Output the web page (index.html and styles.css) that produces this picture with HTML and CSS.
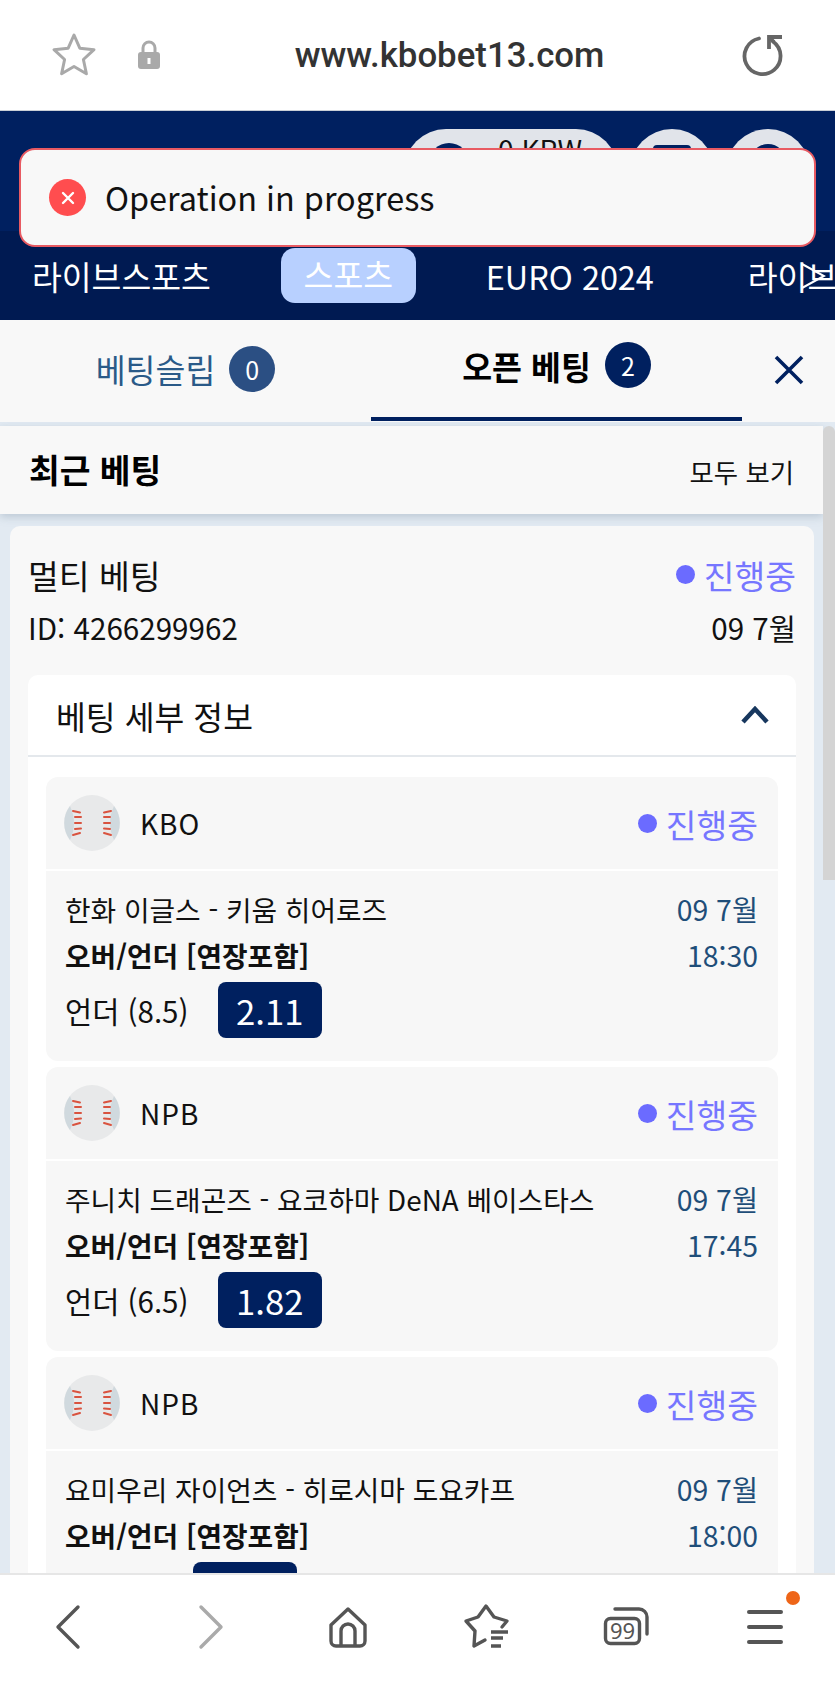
FILE: index.html
```html
<!DOCTYPE html>
<html lang="ko">
<head>
    <meta charset="UTF-8">
    <title>kbobet13</title>
    <link rel="stylesheet" href="styles.css">
</head>
<body>
<svg class="defs" width="0" height="0">
    <symbol id="ball" viewBox="0 0 56 56">
        <circle cx="28" cy="28" r="28" fill="#e8e9ea"/>
        <path d="M6 11 Q14 28 6 45 A28 28 0 0 1 6 11Z M50 11 Q42 28 50 45 A28 28 0 0 0 50 11Z" fill="#d0d9de"/>
        <g stroke="#d9533f" stroke-width="2" stroke-linecap="round" fill="none">
            <path d="M9 16l7 1.500M11 22l6 0M11 28l6 0M11 34l6-.500M9 40l7-2"/>
            <path d="M47 16l-7 1.500M46 22l-6 0M46 28l-6 0M46 34l-6-.500M47 40l-7-2"/>
        </g>
    </symbol>
</svg>

<div class="page">
    <div class="urlbar">
        <svg class="ic-star" width="46" height="46" viewBox="0 0 46 46"><path d="M23 3l5.800 13.200 14.200 1.500-10.600 9.800 3 14.200-12.400-7.200-12.400 7.200 3-14.200L3 17.700l14.200-1.500z" fill="none" stroke="#a9a9a9" stroke-width="3" stroke-linejoin="round"/></svg>
        <svg class="ic-lock" width="24" height="30" viewBox="0 0 24 30"><path d="M6 13V8a6 6 0 0 1 12 0v5" fill="none" stroke="#a9a9a9" stroke-width="3"/><rect x="1" y="12" width="22" height="17" rx="3" fill="#a9a9a9"/><rect x="10.500" y="18" width="3" height="6" fill="#fff"/></svg>
        <div class="url">www.kbobet13.com</div>
        <svg class="ic-reload" width="46" height="46" viewBox="0 0 46 46"><path d="M19 6.500A18 18 0 1 0 33 9.500" fill="none" stroke="#666" stroke-width="3.800" stroke-linecap="round"/><path d="M42 5H29v12" fill="none" stroke="#666" stroke-width="3.800"/><path d="M29 5l5 5" stroke="#666" stroke-width="3.800"/></svg>
    </div>

    <div class="header">
        <div class="acct">
            <div class="pill"><span class="pill-dot"></span>0 KRW</div>
            <div class="round"><span class="round-box"></span></div>
            <div class="round"><span class="round-dot"></span></div>
        </div>
        <div class="nav">
            <span class="nav-item">라이브스포츠</span>
            <span class="nav-item active">스포츠</span>
            <span class="nav-item euro">EURO 2024</span>
            <span class="nav-item">라이브</span>
            <svg class="nav-arrow" width="26" height="26" viewBox="0 0 26 26"><path d="M2 1l22 12L2 25" fill="none" stroke="#fff" stroke-width="2"/></svg>
        </div>
    </div>

    <div class="toast">
        <span class="toast-icon">
            <svg width="16" height="16" viewBox="0 0 16 16"><path d="M3 3l10 10M13 3L3 13" stroke="#fff" stroke-width="2.400" stroke-linecap="round"/></svg>
        </span>
        Operation in progress
    </div>

    <div class="tabs">
        <div class="tab">베팅슬립 <span class="badge light">0</span></div>
        <div class="tab selected">오픈 베팅 <span class="badge">2</span></div>
        <svg class="tab-close" width="32" height="32" viewBox="0 0 32 32"><path d="M3 3l26 26M29 3L3 29" stroke="#00205f" stroke-width="3.600"/></svg>
    </div>

    <div class="panel">
        <div class="panel-head">
            <h2>최근 베팅</h2>
            <span>모두 보기</span>
        </div>
        <div class="scrollbar"></div>

        <div class="card">
            <div class="row title-row">
                <span class="multi">멀티 베팅</span>
                <span class="status"><i></i>진행중</span>
            </div>
            <div class="row id-row">
                <span>ID: 4266299962</span>
                <span>09 7월</span>
            </div>

            <div class="details">
                <div class="details-head">
                    <span>베팅 세부 정보</span>
                    <svg width="28" height="18" viewBox="0 0 28 18"><path d="M2 16L14 3l12 13" fill="none" stroke="#17375e" stroke-width="4.500"/></svg>
                </div>

                <div class="bet">
                    <div class="bet-head">
                        <svg class="ball" width="56" height="56"><use href="#ball"/></svg>
                        <span class="league">KBO</span>
                        <span class="status"><i></i>진행중</span>
                    </div>
                    <div class="bet-body">
                        <div class="bet-info">
                            <div class="match">한화 이글스 - 키움 히어로즈</div>
                            <div class="market">오버/언더 [연장포함]</div>
                            <div class="pick">언더 (8.5) <span class="odds">2.11</span></div>
                        </div>
                        <div class="bet-time"><div>09 7월</div><div>18:30</div></div>
                    </div>
                </div>

                <div class="bet">
                    <div class="bet-head">
                        <svg class="ball" width="56" height="56"><use href="#ball"/></svg>
                        <span class="league">NPB</span>
                        <span class="status"><i></i>진행중</span>
                    </div>
                    <div class="bet-body">
                        <div class="bet-info">
                            <div class="match">주니치 드래곤즈 - 요코하마 DeNA 베이스타스</div>
                            <div class="market">오버/언더 [연장포함]</div>
                            <div class="pick">언더 (6.5) <span class="odds">1.82</span></div>
                        </div>
                        <div class="bet-time"><div>09 7월</div><div>17:45</div></div>
                    </div>
                </div>

                <div class="bet">
                    <div class="bet-head">
                        <svg class="ball" width="56" height="56"><use href="#ball"/></svg>
                        <span class="league">NPB</span>
                        <span class="status"><i></i>진행중</span>
                    </div>
                    <div class="bet-body">
                        <div class="bet-info">
                            <div class="match">요미우리 자이언츠 - 히로시마 도요카프</div>
                            <div class="market">오버/언더 [연장포함]</div>
                            <div class="pick"><span class="odds cut"></span></div>
                        </div>
                        <div class="bet-time"><div>09 7월</div><div>18:00</div></div>
                    </div>
                </div>
            </div>
        </div>
    </div>

    <div class="bottombar">
        <svg class="nav-back" width="30" height="46" viewBox="0 0 30 46"><path d="M23 3L3 23l20 20" fill="none" stroke="#555" stroke-width="3.400" stroke-linecap="round" stroke-linejoin="round"/></svg>
        <svg class="nav-fwd" width="30" height="46" viewBox="0 0 30 46"><path d="M7 3l20 20L7 43" fill="none" stroke="#aaa" stroke-width="3.400" stroke-linecap="round" stroke-linejoin="round"/></svg>
        <svg width="44" height="44" viewBox="0 0 44 44"><path d="M22 4L5 20v16a5 5 0 0 0 5 5h24a5 5 0 0 0 5-5V20z" fill="none" stroke="#555" stroke-width="3.400" stroke-linejoin="round"/><path d="M15 41V26a7 7 0 0 1 14 0v15" fill="none" stroke="#555" stroke-width="3.400"/></svg>
        <svg width="48" height="48" viewBox="0 0 48 48"><path d="M22 37L11 43 12 28 3 18 15 14 23 3 31 14 44 18 39 24" fill="none" stroke="#555" stroke-width="3.400" stroke-linejoin="round" stroke-linecap="round"/><path d="M28 29h17M28 35h12M28 43h10" stroke="#555" stroke-width="3.400"/></svg>
        <svg width="48" height="48" viewBox="0 0 48 48"><rect x="3.500" y="15.500" width="34" height="25" rx="5" fill="none" stroke="#555" stroke-width="3.400"/><path d="M13 6h24a8 8 0 0 1 8 8v17" fill="none" stroke="#555" stroke-width="3.400" stroke-linecap="round"/><text class="tabcount" x="20.500" y="36" text-anchor="middle">99</text></svg>
        <div class="menu"><span></span><span></span><span></span><em></em></div>
    </div>
</div>
</body>
</html>
```

FILE: styles.css
```css
*{
    margin:0;
    padding:0;
    box-sizing:border-box;
}
html,body{
    height:100%;
    overflow:hidden;
}
body{
    font-family:"Noto Sans CJK KR","Noto Sans",sans-serif;
    color:#111;
    background:#fff;
}
.defs{
    position:absolute;
}
.page{
    position:relative;
    width:835px;
    height:1683px;
    display:flex;
    flex-direction:column;
}

/* browser address bar */
.urlbar{
    height:111px;
    flex:none;
    display:flex;
    align-items:center;
    background:#fff;
    border-bottom:1px solid #c9ced6;
    padding:0 49px 0 51px;
}
.ic-lock{
    margin-left:40px;
}
.url{
    flex:1;
    text-align:center;
    font-family:Roboto,"Liberation Sans",sans-serif;
    font-weight:500;
    font-size:34.8px;
    color:#333;
    padding-right:2px;
}

/* site header */
.header{
    height:209px;
    flex:none;
    background:#002060;
    display:flex;
    flex-direction:column;
}
.acct{
    height:120px;
    flex:none;
    padding:18px 25px 0 0;
    display:flex;
    justify-content:flex-end;
    gap:12px;
    overflow:hidden;
}
.pill{
    width:214px;
    height:84px;
    border-radius:42px;
    background:#e1e4ea;
    display:flex;
    gap:29px;
    padding-left:25px;
    font-size:28px;
    line-height:40px;
    color:#111;
}
.pill-dot{
    width:40px;
    height:40px;
    margin-top:14px;
    border-radius:50%;
    background:#002060;
}
.round{
    width:84px;
    height:84px;
    border-radius:50%;
    background:#e1e4ea;
    display:flex;
    justify-content:center;
}
.round-box{
    width:38px;
    height:30px;
    margin-top:16px;
    border-radius:4px;
    background:#002060;
}
.round-dot{
    width:36px;
    height:36px;
    margin-top:15px;
    border-radius:50%;
    background:#002060;
}
.nav{
    position:relative;
    flex:1;
    background:#001a52;
    display:flex;
    align-items:center;
    padding:0 0 0 32px;
    overflow:hidden;
    white-space:nowrap;
}
.nav-item{
    flex:none;
    font-size:32.4px;
    color:#fff;
    margin-right:70px;
}
.nav-item.active{
    background:#b8d0ff;
    border-radius:14px;
    width:135px;
    height:55px;
    line-height:52px;
    text-align:center;
}
.nav-item.euro{
    margin-right:94px;
}
.nav-arrow{
    position:absolute;
    right:9px;
    top:32px;
}

/* toast lies over the header */
.toast{
    position:absolute;
    left:19px;
    top:148px;
    width:797px;
    height:99px;
    background:#f8f8f8;
    border:2px solid #e85a62;
    border-radius:16px;
    display:flex;
    align-items:center;
    padding:0 0 3px 28px;
    font-size:32.4px;
    color:#111;
}
.toast-icon{
    width:37px;
    height:37px;
    border-radius:50%;
    background:#ff4d4f;
    display:flex;
    align-items:center;
    justify-content:center;
    margin:3px 19px 0 0;
}

/* tabs */
.tabs{
    position:relative;
    height:102px;
    flex:none;
    background:#f8f8f8;
    display:flex;
    padding-bottom:5px;
}
.tab{
    display:flex;
    align-items:center;
    justify-content:center;
    gap:14px;
    font-size:32.5px;
    color:#2a5a88;
}
.tab:first-child{
    width:371px;
}
.tab.selected{
    width:371px;
    color:#000;
    font-weight:700;
    border-bottom:4px solid #00205f;
    height:101px;
    padding-bottom:7px;
}
.badge{
    width:46px;
    height:46px;
    border-radius:50%;
    background:#00205f;
    color:#fff;
    font-size:25px;
    font-weight:400;
    display:flex;
    align-items:center;
    justify-content:center;
}
.badge.light{
    background:#2b4f83;
}
.tab-close{
    margin:34px 0 0 31px;
}

/* panel */
.panel{
    position:relative;
    flex:1;
    min-height:0;
    overflow:hidden;
    background:#e2eaf2;
    padding-top:4px;
}
.panel-head{
    height:88px;
    margin-right:12px;
    background:#f8f8f8;
    box-shadow:0 3px 8px rgba(120,140,160,.35);
    display:flex;
    align-items:center;
    justify-content:space-between;
    padding:0 29px 0 29px;
}
.panel-head h2{
    font-size:33.4px;
    font-weight:700;
    color:#000;
    margin-top:-4px;
}
.panel-head span{
    font-size:26.4px;
    color:#111;
    margin-top:2px;
}
.scrollbar{
    position:absolute;
    right:0;
    top:4px;
    width:12px;
    height:454px;
    background:#d4d4d4;
    border-radius:6px 6px 0 0;
}
.card{
    width:804px;
    margin:12px 0 0 10px;
    padding:24px 18px 0;
    background:#f8f8f8;
    border-radius:10px 10px 0 0;
}
.row{
    display:flex;
    justify-content:space-between;
    align-items:center;
}
.title-row{
    height:48px;
}
.multi{
    font-size:33.5px;
}
.status{
    display:flex;
    align-items:center;
    font-size:33.4px;
    color:#7676ff;
}
.status i{
    width:19px;
    height:19px;
    border-radius:50%;
    background:#6b6bff;
    margin-right:9px;
}
.id-row{
    height:40px;
    margin-top:9px;
    font-size:29.6px;
}
.details{
    margin-top:28px;
    background:#fff;
    border-radius:10px 10px 0 0;
    padding-bottom:1px;
}
.details-head{
    height:82px;
    border-bottom:2px solid #e4e8ec;
    display:flex;
    align-items:center;
    justify-content:space-between;
    padding:0 27px 0 28px;
    font-size:32.4px;
}
.bet{
    margin:20px 18px 6px;
    background:#f7f7f7;
    border-radius:12px;
    height:284px;
}
.bet + .bet{
    margin-top:0;
}
.bet-head{
    height:94px;
    border-bottom:2px solid #fff;
    display:flex;
    align-items:center;
    padding:0 20px 0 18px;
}
.league{
    flex:1;
    margin-left:20px;
    font-size:28px;
    letter-spacing:1px;
}
.bet-body{
    display:flex;
    justify-content:space-between;
    padding:19px 20px 0 19px;
}
.match{
    font-size:27.8px;
    line-height:38px;
}
.market{
    font-size:27.8px;
    font-weight:700;
    line-height:38px;
    margin-top:8px;
}
.pick{
    display:flex;
    align-items:center;
    font-size:29.5px;
    margin-top:8px;
    white-space:pre;
}
.odds{
    width:104px;
    height:56px;
    margin-left:21px;
    border-radius:8px;
    background:#00205f;
    color:#fff;
    font-size:34.7px;
    text-align:center;
    line-height:56px;
}
.odds.cut{
    margin-left:128px;
}
.bet-time{
    text-align:right;
    color:#1f4e79;
    font-size:28.4px;
    line-height:38px;
}
.bet-time div + div{
    margin-top:8px;
}

/* browser bottom bar */
.bottombar{
    height:110px;
    flex:none;
    background:#fff;
    border-top:2px solid #e6e6e6;
    display:grid;
    grid-template-columns:repeat(6,1fr);
    align-items:center;
    justify-items:center;
    padding:0 0 4px;
    position:relative;
}
.tabcount{
    font-family:"Noto Sans",sans-serif;
    font-size:22px;
    fill:#555;
}
.menu{
    position:relative;
    width:36px;
    display:flex;
    flex-direction:column;
    gap:11px;
}
.menu span{
    height:4px;
    border-radius:2px;
    background:#555;
}
.menu em{
    position:absolute;
    right:-17px;
    top:-19px;
    width:14px;
    height:14px;
    border-radius:50%;
    background:#ee6518;
}
```
